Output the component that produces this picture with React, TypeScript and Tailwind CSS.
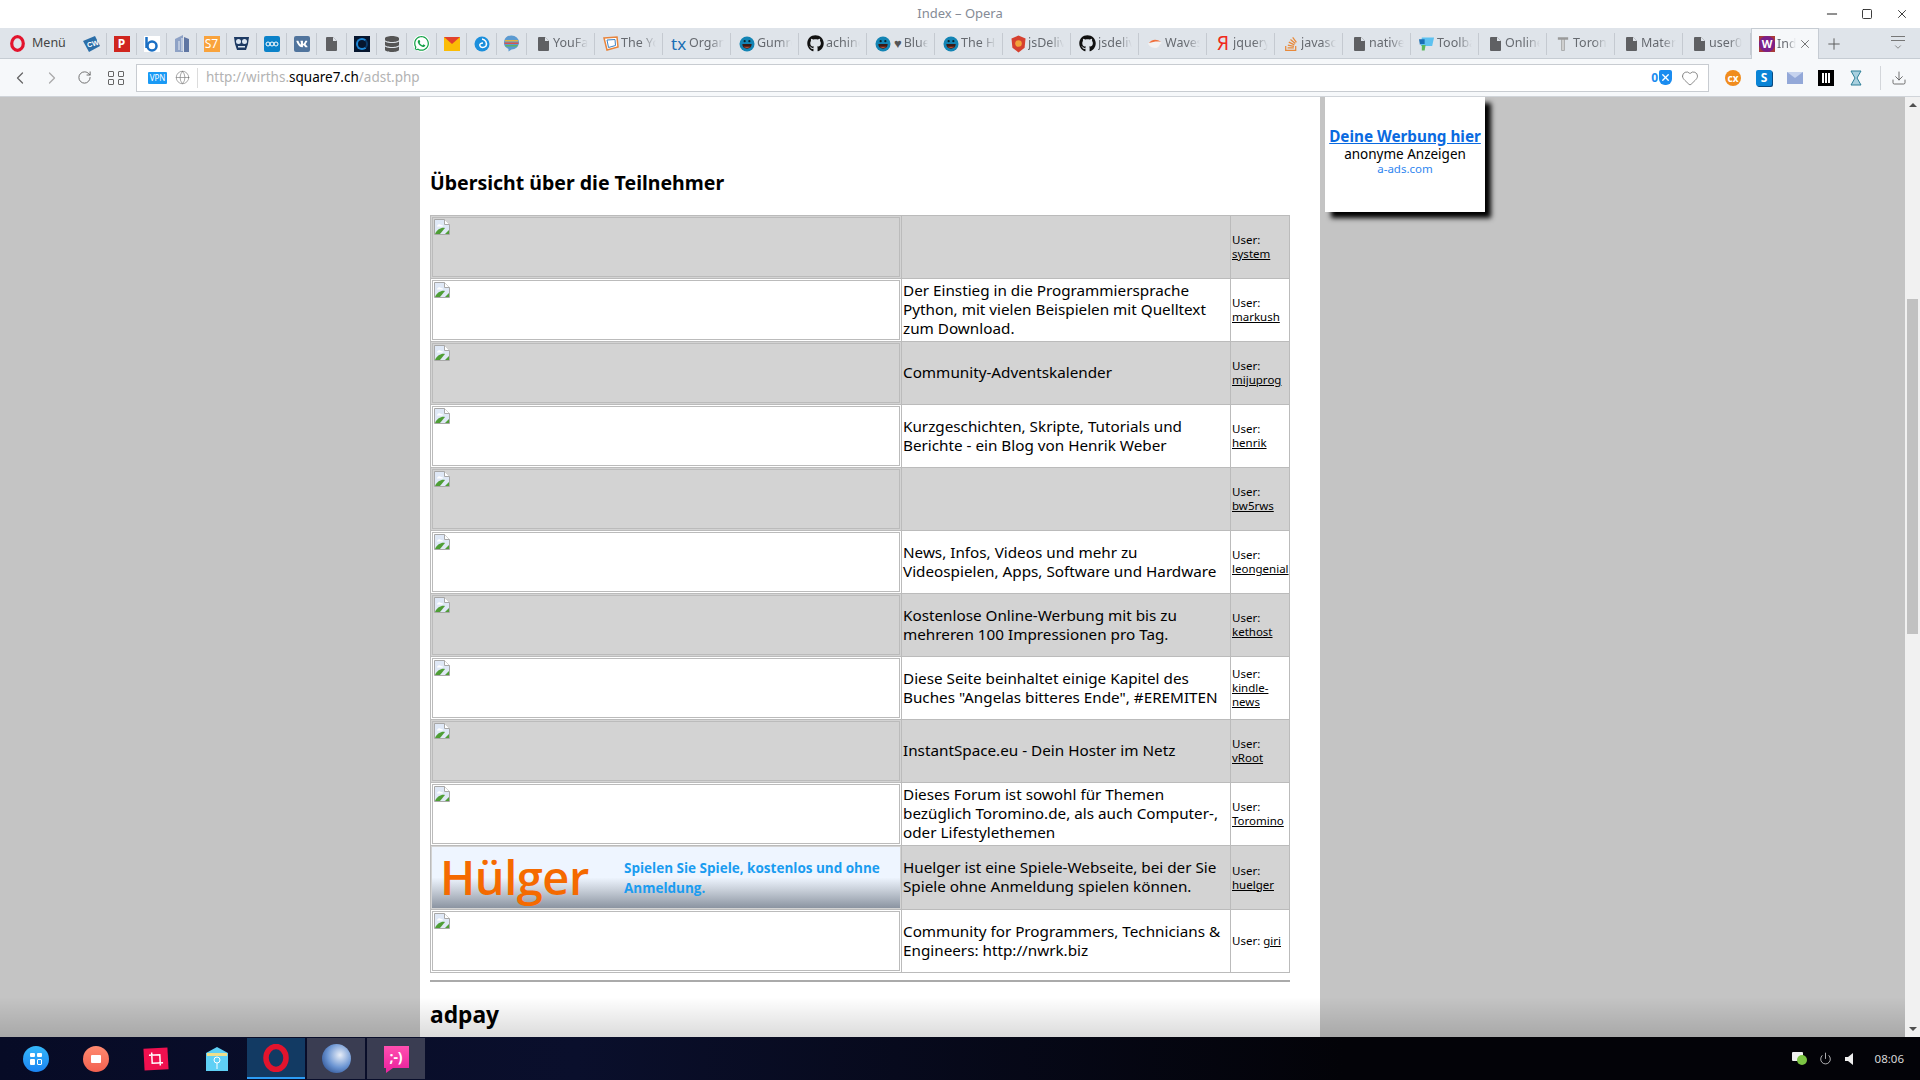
import React from 'react';
import { ChevronLeft, ChevronRight, RotateCw, Globe, Heart, X, Plus, Minus, Square, Download, Power } from 'lucide-react';
import { FaGithub, FaWhatsapp, FaVk, FaStackOverflow, FaDatabase } from 'react-icons/fa';

const sans = 'font-["Noto_Sans","Open_Sans",sans-serif]';

function DocIcon() {
  return (
    <div className="w-4 shrink-0 flex justify-center">
      <svg width="11" height="14" viewBox="0 0 11 14">
        <path d="M1 0h6l4 4v9a1 1 0 0 1-1 1H1a1 1 0 0 1-1-1V1a1 1 0 0 1 1-1z" fill="#5f6063" />
        <path d="M7 0v4h4" fill="#dfe4ea" />
      </svg>
    </div>
  );
}

function Mascot() {
  return (
    <svg width="16" height="16" viewBox="0 0 17 17" className="shrink-0">
      <circle cx="8.5" cy="8.5" r="8" fill="#1384b4" />
      <circle cx="6" cy="5.5" r="1.2" fill="#06232e" />
      <circle cx="11" cy="5.5" r="1.2" fill="#06232e" />
      <path d="M3.5 8.5h10c0 3-2.200 5-5 5s-5-2-5-5z" fill="#3b1a14" />
      <path d="M5 11.500h7c-1 1.500-6 1.500-7 0z" fill="#c1563c" />
    </svg>
  );
}

function GitHub() {
  return <FaGithub className="shrink-0 text-[#111]" size={17} />;
}

const iconTabs: React.ReactNode[] = [
  <svg width="17" height="16" viewBox="0 0 17 16"><path d="M0 5l12-5 5 10-11 6z" fill="#2b6ea8" /><text x="4" y="10.500" fontSize="7" fill="#fff" fontFamily="Liberation Sans" fontWeight="700" transform="rotate(-14 8 8)">CW</text></svg>,
  <div className="w-4 h-4 bg-[#d0261f] text-white text-[12px] leading-4 font-bold text-center">P</div>,
  <svg width="16" height="16" viewBox="0 0 16 16"><rect width="16" height="16" fill="#fff" /><path d="M2.500 1v11" stroke="#1a6fc4" strokeWidth="2.500" /><circle cx="8" cy="10" r="4.500" fill="none" stroke="#1a6fc4" strokeWidth="2.500" /></svg>,
  <svg width="14" height="17" viewBox="0 0 14 17"><path d="M0 4l8-4v17H0z" fill="#8ea2c6" /><path d="M9 2l5 2v13H9z" fill="#5f76a3" /><path d="M4 6v9M7 3v13" stroke="#e6ecf5" /></svg>,
  <div className="w-4 h-4 bg-[#f9a33c] text-white text-[12px] leading-4 text-center">S7</div>,
  <svg width="17" height="15" viewBox="0 0 17 15"><path d="M1 1l15 0-1 7-2 6H4L2 8z" fill="#1d3a63" /><circle cx="5.500" cy="5.500" r="2.500" fill="#dbe6f2" /><circle cx="11.500" cy="5.500" r="2.500" fill="#dbe6f2" /><path d="M5 10h7v1.500H5z" fill="#dbe6f2" /></svg>,
  <div className="w-4 h-4 rounded-[2px] bg-[#0b82c9] flex items-center justify-center"><svg width="14" height="8" viewBox="0 0 14 8"><circle cx="3" cy="4" r="2" fill="none" stroke="#fff" /><circle cx="7" cy="4" r="2" fill="none" stroke="#fff" /><circle cx="11" cy="4" r="2" fill="none" stroke="#fff" /></svg></div>,
  <div className="w-4 h-4 rounded-[2px] bg-[#50749d] flex items-center justify-center"><FaVk className="text-white" size={12} /></div>,
  <DocIcon />,
  <div className="w-4 h-4 bg-[#06162f] flex items-center justify-center"><div className="w-3 h-3 rounded-full border-2 border-[#1e88d8] border-r-[#0a3a6a]" /></div>,
  <FaDatabase className="text-[#555]" size={16} />,
  <FaWhatsapp className="text-[#16a34a] bg-white rounded-full" size={17} />,
  <svg width="16" height="14" viewBox="0 0 16 14"><rect width="16" height="14" fill="#fbbc05" /><path d="M0 0l8 7 8-7z" fill="#e2412c" /></svg>,
  <svg width="16" height="16" viewBox="0 0 16 16"><circle cx="8" cy="8" r="7.500" fill="#1b8fdc" /><path d="M8 3a5 5 0 0 1 4 7c-2 2-5 2-6 0s1-3 3-3" fill="none" stroke="#fff" strokeWidth="1.500" /></svg>,
  <svg width="17" height="17" viewBox="0 0 17 17"><path d="M8.500 0.500a7.500 7 0 0 1 0 14l-3 2v-2.600a7.500 7 0 0 1 3-13.400z" fill="#5b9ad1" /><path d="M2 5h13v1.500H2z" fill="#e3b341" /><path d="M1.500 7.500h14V9h-14z" fill="#d9534f" /><path d="M2.500 10h12v1.500h-12z" fill="#62b162" /></svg>,
];

const textTabs: { icon: React.ReactNode; label: string }[] = [
  { icon: <DocIcon />, label: 'YouFav' },
  { icon: <svg width="16" height="16" viewBox="0 0 16 16" className="shrink-0"><path d="M1 2l13-1 1 10-11 3z" fill="#fff" stroke="#e8833a" strokeWidth="1.500" /><path d="M4 4l8-.5.500 6-7 2z" fill="none" stroke="#3b82c4" /></svg>, label: 'The Yot' },
  { icon: <span className="w-4 shrink-0 text-[#1a6fb5] text-[17px] leading-none">tx</span>, label: 'Organi' },
  { icon: <Mascot />, label: 'Gumro' },
  { icon: <GitHub />, label: 'aching' },
  { icon: <><Mascot /><span className="shrink-0 text-[#555] text-[13px] leading-none ml-px">♥</span></>, label: 'Blue' },
  { icon: <Mascot />, label: 'The He' },
  { icon: <svg width="15" height="18" viewBox="0 0 16 18" className="shrink-0"><path d="M8 0l7.500 3-1 10L8 18l-6.500-5-1-10z" fill="#d6402f" /><circle cx="8" cy="8.500" r="3.500" fill="#f2a33a" /></svg>, label: 'jsDeliv' },
  { icon: <GitHub />, label: 'jsdeliv' },
  { icon: <svg width="16" height="12" viewBox="0 0 16 12" className="shrink-0"><path d="M1 6c3-5 9-5 14-1-3 1-3 5-6 5-3 0-6-1-8-4z" fill="#f2f2f2" /><path d="M2 5c3-4 8-4 12-1-4-1-8 0-12 1z" fill="#f0703c" /></svg>, label: 'Waves' },
  { icon: <span className="shrink-0 w-4 text-center text-[#f0291b] text-[19px] leading-none">Я</span>, label: 'jquery' },
  { icon: <FaStackOverflow className="shrink-0 text-[#e8893a]" size={16} />, label: 'javasc' },
  { icon: <DocIcon />, label: 'native' },
  { icon: <svg width="16" height="16" viewBox="0 0 17 16" className="shrink-0"><path d="M3 1h13l-2 9H2z" fill="#5dc1f0" /><path d="M0 3h6v5H2l-1 1z" fill="#1a6fb5" /><path d="M3 9h4l-1 6H3z" fill="#5cb85c" /></svg>, label: 'Toolba' },
  { icon: <DocIcon />, label: 'Online' },
  { icon: <div className="w-4 shrink-0 flex justify-center"><svg width="12" height="16" viewBox="0 0 14 18"><path d="M1 1h12v3H9v13H5V4H1z" fill="#9a9a9a" /><path d="M6 4v12h2V4z" fill="#d8d8d8" /></svg></div>, label: 'Toron' },
  { icon: <DocIcon />, label: 'Mater' },
  { icon: <DocIcon />, label: 'user0' },
];

const rows: { text: string; user: string; inline?: boolean }[] = [
  { text: '', user: 'system' },
  { text: 'Der Einstieg in die Programmiersprache Python, mit vielen Beispielen mit Quelltext zum Download.', user: 'markush' },
  { text: 'Community-Adventskalender', user: 'mijuprog' },
  { text: 'Kurzgeschichten, Skripte, Tutorials und Berichte - ein Blog von Henrik Weber', user: 'henrik' },
  { text: '', user: 'bw5rws' },
  { text: 'News, Infos, Videos und mehr zu Videospielen, Apps, Software und Hardware', user: 'leongenial' },
  { text: 'Kostenlose Online-Werbung mit bis zu mehreren 100 Impressionen pro Tag.', user: 'kethost' },
  { text: 'Diese Seite beinhaltet einige Kapitel des Buches "Angelas bitteres Ende", #EREMITEN', user: 'kindle-news' },
  { text: 'InstantSpace.eu - Dein Hoster im Netz', user: 'vRoot' },
  { text: 'Dieses Forum ist sowohl für Themen bezüglich Toromino.de, als auch Computer-, oder Lifestylethemen', user: 'Toromino' },
  { text: 'Huelger ist eine Spiele-Webseite, bei der Sie Spiele ohne Anmeldung spielen können.', user: 'huelger' },
  { text: 'Community for Programmers, Technicians & Engineers: http://nwrk.biz', user: 'giri', inline: true },
];

function BrokenImage() {
  return (
    <svg width="16" height="16" viewBox="0 0 16 16" className="block">
      <path d="M0.500 0.500h10l5 5v10H0.500z" fill="#dfe8f6" stroke="#a8a8a8" />
      <path d="M10.500 0.500v5h5" fill="#fff" stroke="#a8a8a8" />
      <path d="M3 7c1-2 3-2 4-1 2 0 2 1 2 1.500H3z" fill="#fff" />
      <path d="M1 15c2-5 7-7 10-6l-5 6z" fill="#4f9e36" />
      <path d="M11 15l4-4v4z" fill="#4f9e36" />
    </svg>
  );
}

function Banner() {
  return (
    <div className="h-[61px] flex items-center bg-[linear-gradient(180deg,#eef5ff_0%,#eef5ff_50%,#c5ccd6_72%,#8b94a1_100%)] overflow-hidden">
      <span className='w-[192px] pl-[8px] text-[#f56a00] text-[47px] leading-[61px] font-semibold font-["Open_Sans",sans-serif] tracking-[-0.5px]'>Hülger</span>
      <span className='w-[270px] text-[#1a9cf0] text-[13.5px] leading-[20px] font-bold font-["Open_Sans",sans-serif]'>Spielen Sie Spiele, kostenlos und ohne Anmeldung.</span>
    </div>
  );
}

export default function App() {
  return (
    <div className={`w-[1920px] h-[1080px] overflow-hidden flex flex-col bg-white ${sans}`}>
      {/* title bar */}
      <div className="h-[28px] shrink-0 bg-white flex items-center relative">
        <div className="flex-1 text-center text-[13px] text-[#858b96]">Index – Opera</div>
        <div className="absolute right-0 top-0 h-[28px] flex items-center text-[#222]">
          <div className="w-[35px] flex justify-center"><Minus size={16} strokeWidth={1.5} /></div>
          <div className="w-[35px] flex justify-center"><Square size={12} strokeWidth={1.75} /></div>
          <div className="w-[36px] flex justify-center"><X size={14} strokeWidth={1.5} /></div>
        </div>
      </div>

      {/* tabs */}
      <div className="h-[31px] shrink-0 pt-px bg-[#dfe4ea] border-b border-[#c6ccd3] flex items-center text-[12.5px] text-[#666a70]">
        <div className="w-[77px] shrink-0 flex items-center pl-[10px] gap-[7px]">
          <svg width="15" height="17" viewBox="0 0 15 17"><ellipse cx="7.500" cy="8.500" rx="5.800" ry="6.800" fill="none" stroke="#e3142d" strokeWidth="3.200" /></svg>
          <span className="text-[#444]">Menü</span>
        </div>
        {iconTabs.map((icon, i) => (
          <div key={i} className="w-[30px] h-[22px] shrink-0 flex items-center justify-center border-r border-[#c5cad1]">{icon}</div>
        ))}
        {textTabs.map((tab, i) => (
          <div key={i} className="w-[68px] h-[22px] shrink-0 flex items-center pl-[8px] pr-[6px] gap-[2px] border-r border-[#c5cad1] overflow-hidden">
            {tab.icon}
            <span className="overflow-hidden whitespace-nowrap [mask-image:linear-gradient(90deg,#000_60%,transparent)]">{tab.label}</span>
          </div>
        ))}
        <div className="w-[68px] h-[31px] shrink-0 -mt-px bg-[#f6f8fa] border-x border-t border-[#c6ccd3] -mb-px flex items-center pl-[7px] gap-[2px]">
          <div className="w-4 h-4 shrink-0 bg-[#a83a3a]"><div className="w-4 h-4 rounded-full bg-[#7b1f8a] text-white text-[11px] leading-4 text-center font-bold">W</div></div>
          <span className="w-[19px] overflow-hidden whitespace-nowrap [mask-image:linear-gradient(90deg,#000_50%,transparent)]">Index</span>
          <X size={14} strokeWidth={1.25} className="text-[#444]" />
        </div>
        <div className="w-[30px] flex justify-center"><Plus size={18} strokeWidth={1.25} className="text-[#555]" /></div>
        <div className="ml-[42px] flex flex-col items-center text-[#777]">
          <div className="w-[14px] border-t border-[#777] mb-[3px]" />
          <div className="w-[14px] border-t border-[#777] mb-[1px]" />
          <ChevronRight size={10} className="rotate-90" />
        </div>
      </div>

      {/* address bar */}
      <div className="h-[38px] shrink-0 bg-[#f6f8fa] border-b border-[#d0d4d9] flex items-center">
        <div className="w-[136px] shrink-0 flex items-center text-[#666]">
          <div className="w-[40px] flex justify-center"><ChevronLeft size={20} strokeWidth={1.5} /></div>
          <div className="w-[24px] flex justify-center text-[#aaa]"><ChevronRight size={20} strokeWidth={1.5} /></div>
          <div className="w-[40px] flex justify-center"><RotateCw size={15} strokeWidth={1.5} /></div>
          <div className="w-[24px] grid grid-cols-2 gap-[2px] justify-items-center px-[3px]">
            <div className="w-[6px] h-[6px] rounded-[1px] border border-[#666]" />
            <div className="w-[6px] h-[6px] rounded-[1px] border border-[#666]" />
            <div className="w-[6px] h-[6px] rounded-[1px] border border-[#666]" />
            <div className="w-[6px] h-[6px] rounded-[1px] border border-[#666]" />
          </div>
        </div>
        <div className="w-[1573px] h-[28px] shrink-0 bg-white border border-[#c8ccd1] flex items-center pl-[11px]">
          <div className="w-[19px] h-[12px] bg-[#1a9af5] rounded-[1px] text-white text-[8px] leading-[12px] text-center">VPN</div>
          <Globe size={15} strokeWidth={1} className="ml-[8px] text-[#777]" />
          <div className="w-px h-[20px] bg-[#dcdcdc] ml-[7px]" />
          <div className="ml-[8px] text-[13.5px] text-[#b3b3b3]">http://wirths.<span className="text-black">square7.ch</span>/adst.php</div>
          <div className="ml-auto flex items-center">
            <span className="text-[#1a8cf0] text-[12px] font-bold">0</span>
            <div className="relative ml-px w-[13px] h-[15px] bg-[#1a8cf0] rounded-b-[6px] rounded-t-[2px] flex items-center justify-center"><X size={11} strokeWidth={3} className="text-white" /></div>
            <Heart size={18} strokeWidth={1} className="ml-[9px] mr-[9px] text-[#666]" />
          </div>
        </div>
        <div className="flex-1 flex items-center pl-[14px]">
          <div className="w-[20px] h-[16px] flex justify-center"><div className="w-4 h-4 rounded-full bg-[#f08c1d] text-white text-[10px] leading-4 text-center font-bold">cx</div></div>
          <div className="w-[16px] h-[16px] ml-[13px] rounded-[2px] bg-[#0a84d6] shadow-[1px_1px_0_#0a4a80] text-white text-[12px] leading-4 text-center font-bold">S</div>
          <svg width="16" height="12" viewBox="0 0 16 12" className="ml-[15px]"><rect width="16" height="12" fill="#93a8d8" /><path d="M0 0l8 6 8-6z" fill="#c6d3ee" /></svg>
          <div className="w-[16px] h-[16px] ml-[15px] bg-black flex items-center justify-center gap-px"><div className="w-[2px] h-[10px] bg-white" /><div className="w-[2px] h-[10px] bg-white" /><div className="w-[2px] h-[10px] bg-white" /></div>
          <svg width="12" height="16" viewBox="0 0 12 16" className="ml-[16px]"><path d="M1 1h10L7 8l4 7H1l4-7z" fill="#a8d0df" stroke="#2d7f97" /></svg>
          <div className="w-px h-[24px] bg-[#d3d6da] ml-[18px]" />
          <Download size={16} strokeWidth={1.25} className="ml-[10px] text-[#555]" />
        </div>
      </div>

      {/* page */}
      <div className="flex-1 min-h-0 flex relative bg-[#c4c4c4] overflow-hidden">
        <div className="w-[420px] shrink-0" />
        <div className="w-[900px] shrink-0 bg-white pl-[10px] pr-[30px] text-black">
          <h2 className="mt-[70px] mb-[16px] text-[19.5px] leading-[32px] font-bold">Übersicht über die Teilnehmer</h2>
          <table className="w-[859px] table-fixed border-collapse border border-[#bbb]">
            <colgroup>
              <col className="w-[471px]" />
              <col className="w-[329px]" />
              <col className="w-[59px]" />
            </colgroup>
            <tbody>
              {rows.map((row, i) => (
                <tr key={i} className={`h-[63px] ${i % 2 === 0 ? 'bg-[#d3d3d3]' : 'bg-white'}`}>
                  <td className="border border-[#bbb] p-px align-top">
                    {row.user === 'huelger' ? (
                      <Banner />
                    ) : (
                      <div className="h-[60px] border border-[#bbb] p-px"><BrokenImage /></div>
                    )}
                  </td>
                  <td className="border border-[#bbb] pl-px pr-[2px] pb-px text-[15.25px] leading-[19px] align-middle">{row.text}</td>
                  <td className="border border-[#bbb] pl-px text-[11.5px] leading-[14px] align-middle overflow-visible">
                    User:{row.inline ? ' ' : <br />}
                    <a className="underline">{row.user}</a>
                  </td>
                </tr>
              ))}
            </tbody>
          </table>
          <div className="mt-[7px] border-t-2 border-[#aaa]" />
          <h2 className="mt-[15px] text-[22.75px] leading-[36px] font-bold">adpay</h2>
        </div>
        <div className="ml-[5px] w-[160px] h-[115px] shrink-0 bg-white shadow-[6px_6px_5px_#000] text-center flex flex-col pt-[29px]">
          <a className="text-[15.25px] leading-[20px] font-bold text-[#0a6ae0] underline">Deine Werbung hier</a>
          <span className="text-[13.5px] leading-[16px]">anonyme Anzeigen</span>
          <span className="text-[11.5px] leading-[14px] text-[#2f86f0]">a-ads.com</span>
        </div>
        <div className="absolute left-0 right-[15px] bottom-0 h-[40px] bg-[linear-gradient(180deg,transparent,rgba(0,0,0,0.14))]" />
        {/* scrollbar */}
        <div className="absolute right-0 top-0 bottom-0 w-[15px] bg-[#f1f1f1] flex flex-col items-center">
          <div className="mt-[6px] w-0 h-0 border-x-[4px] border-x-transparent border-b-[4px] border-b-[#505050]" />
          <div className="mt-[192px] w-[11px] h-[335px] bg-[#c1c1c1]" />
          <div className="mt-auto mb-[6px] w-0 h-0 border-x-[4px] border-x-transparent border-t-[4px] border-t-[#505050]" />
        </div>
      </div>

      {/* taskbar */}
      <div className="h-[43px] shrink-0 bg-[linear-gradient(90deg,#070b26,#0a0f2c_30%,#030308_70%)] flex items-center">
        <div className="w-[66px] flex justify-center pl-[6px]"><div className="w-[26px] h-[26px] rounded-full bg-[linear-gradient(180deg,#35b8fb,#1b84f2)] grid grid-cols-2 gap-[2px] p-[7px]"><div className="bg-white rounded-[1px]" /><div className="bg-white rounded-[1px]" /><div className="bg-white rounded-[1px]" /><div className="border border-white rounded-[1px]" /></div></div>
        <div className="w-[60px] flex justify-center"><div className="w-[26px] h-[26px] rounded-full bg-[linear-gradient(180deg,#ff8a70,#f2604f)] flex items-center justify-center"><div className="w-[10px] h-[8px] bg-white rounded-[1px]" /></div></div>
        <div className="w-[60px] flex justify-center"><div className="w-[24px] h-[22px] bg-[#f0104f] flex items-center justify-center -rotate-3"><svg width="14" height="14" viewBox="0 0 14 14"><path d="M3 0v11h11M0 3h11v11" fill="none" stroke="#fff" strokeWidth="1.500" /></svg></div></div>
        <div className="w-[61px] flex justify-center"><svg width="24" height="26" viewBox="0 0 24 26"><path d="M1 7l11-6 11 6v18H1z" fill="#5fd0f5" /><rect x="2" y="7" width="20" height="3" fill="#f0df8a" /><circle cx="12" cy="14" r="3" fill="none" stroke="#fff" /><path d="M12 17v6" stroke="#fff" /></svg></div>
        <div className="w-[58px] h-[41px] mr-[2px] bg-[#123a63] border-b-2 border-[#2c9cf5] flex items-center justify-center"><svg width="26" height="28" viewBox="0 0 26 28"><ellipse cx="13" cy="14" rx="10" ry="11.500" fill="none" stroke="#e3142d" strokeWidth="5.500" /></svg></div>
        <div className="w-[58px] h-[41px] mr-[2px] bg-[#3a3d52] flex items-center justify-center"><div className="w-[29px] h-[29px] rounded-full bg-[radial-gradient(circle_at_62%_38%,#e8eef8,#6a94d2_50%,#1d3f80_95%)]" /></div>
        <div className="w-[58px] h-[41px] bg-[#3a3d52] flex items-center justify-center"><div className="relative w-[25px] h-[22px] -mt-[4px] bg-[linear-gradient(180deg,#ff4fb0,#ee28a0)] text-white text-[14px] leading-[22px] text-center font-bold">;-)<div className="absolute left-[2px] top-[22px] w-0 h-0 border-t-[5px] border-t-[#ee28a0] border-r-[7px] border-r-transparent" /></div></div>
        <div className="ml-auto flex items-center text-white">
          <div className="relative w-[11px] h-[9px] -mt-[5px] bg-[#f0f0f0] rounded-[1px]"><div className="absolute left-[5px] top-[3px] w-[10px] h-[10px] rounded-full bg-[#7cc544]" /></div>
          <Power size={13} strokeWidth={1.25} className="ml-[16px]" />
          <svg width="9" height="12" viewBox="0 0 9 12" className="ml-[13px]"><path d="M0 4h3l5-4v12l-5-4H0z" fill="#eee" /></svg>
          <span className="ml-[21px] mr-[16px] text-[11.500px] text-[#d8d8d8]">08:06</span>
        </div>
      </div>
    </div>
  );
}
